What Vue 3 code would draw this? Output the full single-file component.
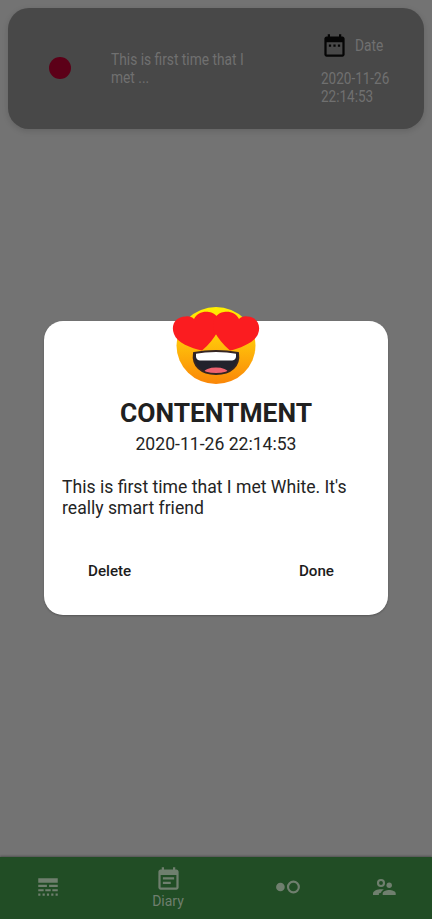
<script setup>
const entry = {
  mood: 'CONTENTMENT',
  date: '2020-11-26 22:14:53',
  text: "This is first time that I met White. It's really smart friend",
}
</script>

<template>
  <div class="screen">
    <main class="page">
      <article class="card">
        <span class="dot"></span>
        <p class="excerpt"><span>This is first time that I<br />met ...</span></p>
        <div class="when">
          <div class="when-head">
            <svg viewBox="0 0 24 24" width="27" height="27">
              <path d="M9 11H7v2h2v-2zm4 0h-2v2h2v-2zm4 0h-2v2h2v-2zm2-7h-1V2h-2v2H8V2H6v2H5c-1.11 0-1.99.9-1.99 2L3 20c0 1.1.89 2 2 2h14c1.1 0 2-.9 2-2V6c0-1.1-.9-2-2-2zm0 16H5V9h14v11z" />
            </svg>
            <span class="label">Date</span>
          </div>
          <p class="stamp"><span>2020-11-26<br />22:14:53</span></p>
        </div>
      </article>
    </main>

    <nav class="tabs">
      <a class="tab">
        <svg viewBox="0 0 24 24" width="26" height="26">
          <path d="M3 16h5v-2H3v2zm6.5 0h5v-2h-5v2zm6.5 0h5v-2h-5v2zM3 20h2v-2H3v2zm4 0h2v-2H7v2zm4 0h2v-2h-2v2zm4 0h2v-2h-2v2zm4 0h2v-2h-2v2zM3 12h8v-2H3v2zm10 0h8v-2h-8v2zM3 4v4h18V4H3z" />
        </svg>
      </a>
      <a class="tab active">
        <svg viewBox="0 0 24 24" width="27" height="27">
          <path d="M19 3h-1V1h-2v2H8V1H6v2H5c-1.11 0-1.99.9-1.99 2L3 19c0 1.1.89 2 2 2h14c1.1 0 2-.9 2-2V5c0-1.1-.9-2-2-2zm0 16H5V8h14v11zM17 10H7v2h10v-2zm-3 4H7v2h7v-2z" />
        </svg>
        <span>Diary</span>
      </a>
      <a class="tab">
        <svg viewBox="0 0 24 24" width="26" height="26">
          <circle cx="5" cy="12" r="4" />
          <circle cx="17" cy="12" r="5" fill="none" stroke="#6f7f6e" stroke-width="2" />
        </svg>
      </a>
      <a class="tab">
        <svg viewBox="0 0 26 26" width="26" height="26">
          <circle cx="10" cy="9" r="3" fill="none" stroke="#6f7f6e" stroke-width="2.1" />
          <circle cx="18.2" cy="11.2" r="2.7" />
          <path d="M2 21v-1.6c0-2.7 4.5-4.2 8-4.2 1 0 2 .1 2.900.3-1.700.8-2.500 1.800-2.900 3.300-.8.2-1.400.3-2.100.6V21z" />
          <path d="M11.700 21v-1.500c0-2.200 3.700-3.400 6.500-3.400s6.500 1.200 6.500 3.400V21z" />
        </svg>
      </a>
    </nav>

    <div class="overlay">
      <section class="dialog">
        <svg class="emoji" viewBox="0 0 90 80" width="90" height="80">
          <defs>
            <linearGradient id="face" x1="0" y1="0" x2="0" y2="1">
              <stop offset="0" stop-color="#fff000" />
              <stop offset="0.45" stop-color="#ffc20a" />
              <stop offset="1" stop-color="#fa8608" />
            </linearGradient>
            <clipPath id="mouth">
              <path d="M23 47C36 44.500 54 44.500 67 47C69 60 60 68 45 68C30 68 21 60 23 47Z" />
            </clipPath>
          </defs>
          <ellipse cx="45" cy="39.500" rx="39.500" ry="38.500" fill="url(#face)" />
          <g fill="#fb1c20">
            <path d="M31 44.500C20 42 6 37 3 28C-1 18 6 10 15 10.500C18 10 21 11 23 13C26 7 32 5 38 6C47 7 51 17 47 25C43 32 38 39 31 44.500Z" />
            <path d="M59 44.500C70 42 84 36 87 28C91 18 84 10 76 10.500C73 10 70 11 68 13C65 7 59 5 53 6C44 7 40 17 43 25C47 32 52 39 59 44.500Z" />
          </g>
          <g clip-path="url(#mouth)">
            <rect x="20" y="40" width="50" height="30" fill="#22222c" />
            <path d="M25 46H65V51C64 55 61 54.500 57 54.500H33C29 54.500 26 55 25 51Z" fill="#fff" />
            <ellipse cx="45" cy="66.500" rx="12" ry="5" fill="#ef6270" />
          </g>
          <path d="M23 47C36 44.500 54 44.500 67 47C69 60 60 68 45 68C30 68 21 60 23 47Z" fill="none" stroke="#352523" stroke-width="2" />
        </svg>
        <h1>{{ entry.mood }}</h1>
        <p class="date">{{ entry.date }}</p>
        <p class="body">{{ entry.text }}</p>
        <div class="actions">
          <button>Delete</button>
          <button>Done</button>
        </div>
      </section>
    </div>
  </div>
</template>

<style>
body { margin: 0; background: #737373; }
</style>

<style scoped>
.screen {
  position: relative;
  display: flex;
  flex-direction: column;
  width: 432px;
  height: 919px;
  overflow: hidden;
  background: #737373;
  font-family: Roboto, sans-serif;
}
p, h1 { margin: 0; }
.page { flex: 1; padding: 8px; }
.card {
  box-sizing: border-box;
  display: flex;
  width: 416px;
  height: 121px;
  border-radius: 21px;
  background: #484848;
  box-shadow: 0 2px 6px rgba(0, 0, 0, 0.14);
  color: #707070;
  font-size: 16px;
  line-height: 17.500px;
}
.dot {
  width: 22px;
  height: 22px;
  margin: 49px 0 0 41px;
  border-radius: 50%;
  background: #5c0018;
}
.excerpt { width: 170px; margin: 43px 0 0 40px; }
.excerpt span, .stamp span, .label {
  display: inline-block;
  transform: scaleX(0.86);
  transform-origin: left;
  white-space: nowrap;
}
.when { margin: 24px 0 0 40px; }
.when-head { display: flex; align-items: center; height: 27px; }
.when-head svg { fill: #050505; }
.label { margin-left: 7px; }
.stamp { margin-top: 11px; }
.stamp span { transform: scaleX(0.845); }
.tabs {
  box-sizing: border-box;
  display: grid;
  grid-template-columns: 96px 144px 96px 96px;
  height: 62px;
  background: #214d25;
  box-shadow: 0 -1px 2px rgba(0, 0, 0, 0.3);
}
.tab {
  display: flex;
  flex-direction: column;
  align-items: center;
  padding-top: 17px;
  color: #6f7f6e;
  font-size: 14px;
  line-height: 16px;
}
.tab.active { padding-top: 9px; }
.tab svg { display: block; fill: #6f7f6e; }
.overlay {
  position: absolute;
  inset: 0;
  display: flex;
  justify-content: center;
  align-items: flex-start;
  padding-top: 321px;
}
.dialog {
  box-sizing: border-box;
  display: flex;
  flex-direction: column;
  align-items: center;
  width: 344px;
  height: 293.500px;
  padding: 0 18px;
  border-radius: 19px;
  background: #fff;
  box-shadow: 0 1px 2px rgba(0, 0, 0, 0.25);
  color: #242424;
}
.emoji { display: block; flex: none; margin-top: -15px; }
h1 { margin-top: 12px; font-size: 26.400px; line-height: 30px; font-weight: 700; color: #202020; }
.date { margin-top: 6px; font-size: 17.600px; line-height: 21px; }
.body { align-self: stretch; margin-top: 22px; font-size: 17.600px; line-height: 21px; }
.actions {
  display: flex;
  align-self: stretch;
  justify-content: space-between;
  margin-top: 31px;
  padding: 0 36px 0 26px;
}
button {
  padding: 12px 0;
  border: 0;
  background: none;
  color: #1c1c1c;
  font: 500 15.200px/18px Roboto, sans-serif;
}
</style>
